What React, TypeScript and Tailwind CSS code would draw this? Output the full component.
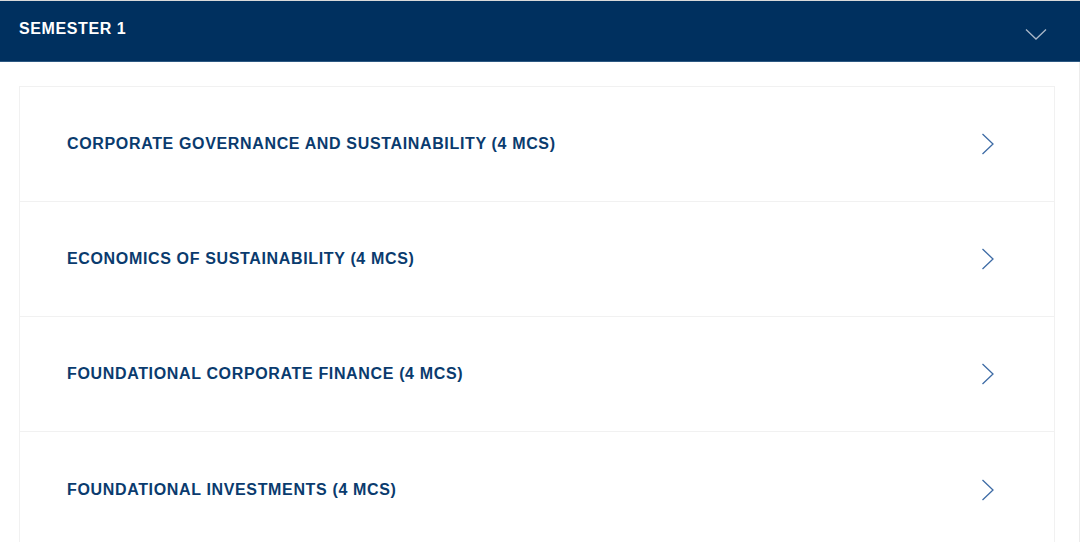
import React from "react";

const items = [
  "CORPORATE GOVERNANCE AND SUSTAINABILITY (4 MCS)",
  "ECONOMICS OF SUSTAINABILITY (4 MCS)",
  "FOUNDATIONAL CORPORATE FINANCE (4 MCS)",
  "FOUNDATIONAL INVESTMENTS (4 MCS)",
];

export default function App() {
  return (
    <div
      className="w-[1080px] h-[542px] overflow-hidden bg-white border-t border-[#d9d9d9]"
      style={{ fontFamily: '"Liberation Sans", Arial, sans-serif' }}
    >
      <div className="h-[61px] bg-[#00305f] border-b border-[#2c5882] flex items-start justify-between pl-[19px] pr-[33px]">
        <span className="mt-[18px] text-white font-bold text-[16px] leading-[20px] tracking-[0.6px]">SEMESTER 1</span>
        <svg width="22" height="13" viewBox="0 0 22 13" className="mt-[27px]" fill="none">
          <path d="M1 1.5 L11 11 L21 1.5" stroke="#a9b7c8" strokeWidth="1.3" />
        </svg>
      </div>
      <div className="flex pt-[24px] pl-[19px] pr-[24px] border-r border-[#ececec] h-full">
        <div className="flex-1 border border-[#f1f1f1] border-b-0 flex flex-col">
          {items.map((t, i) => (
            <div
              key={i}
              className={`h-[115px] shrink-0 flex items-center justify-between pl-[47px] pr-[59px] ${i < items.length - 1 ? "border-b border-[#f1f1f1]" : ""}`}
            >
              <span className="text-[#0a3b6e] font-bold text-[16px] leading-[20px] tracking-[0.65px]">{t}</span>
              <svg width="14" height="22" viewBox="0 0 14 22" fill="none">
                <path d="M1.5 1 L12 11 L1.5 21" stroke="#3d6ba5" strokeWidth="1.3" />
              </svg>
            </div>
          ))}
        </div>
      </div>
    </div>
  );
}
